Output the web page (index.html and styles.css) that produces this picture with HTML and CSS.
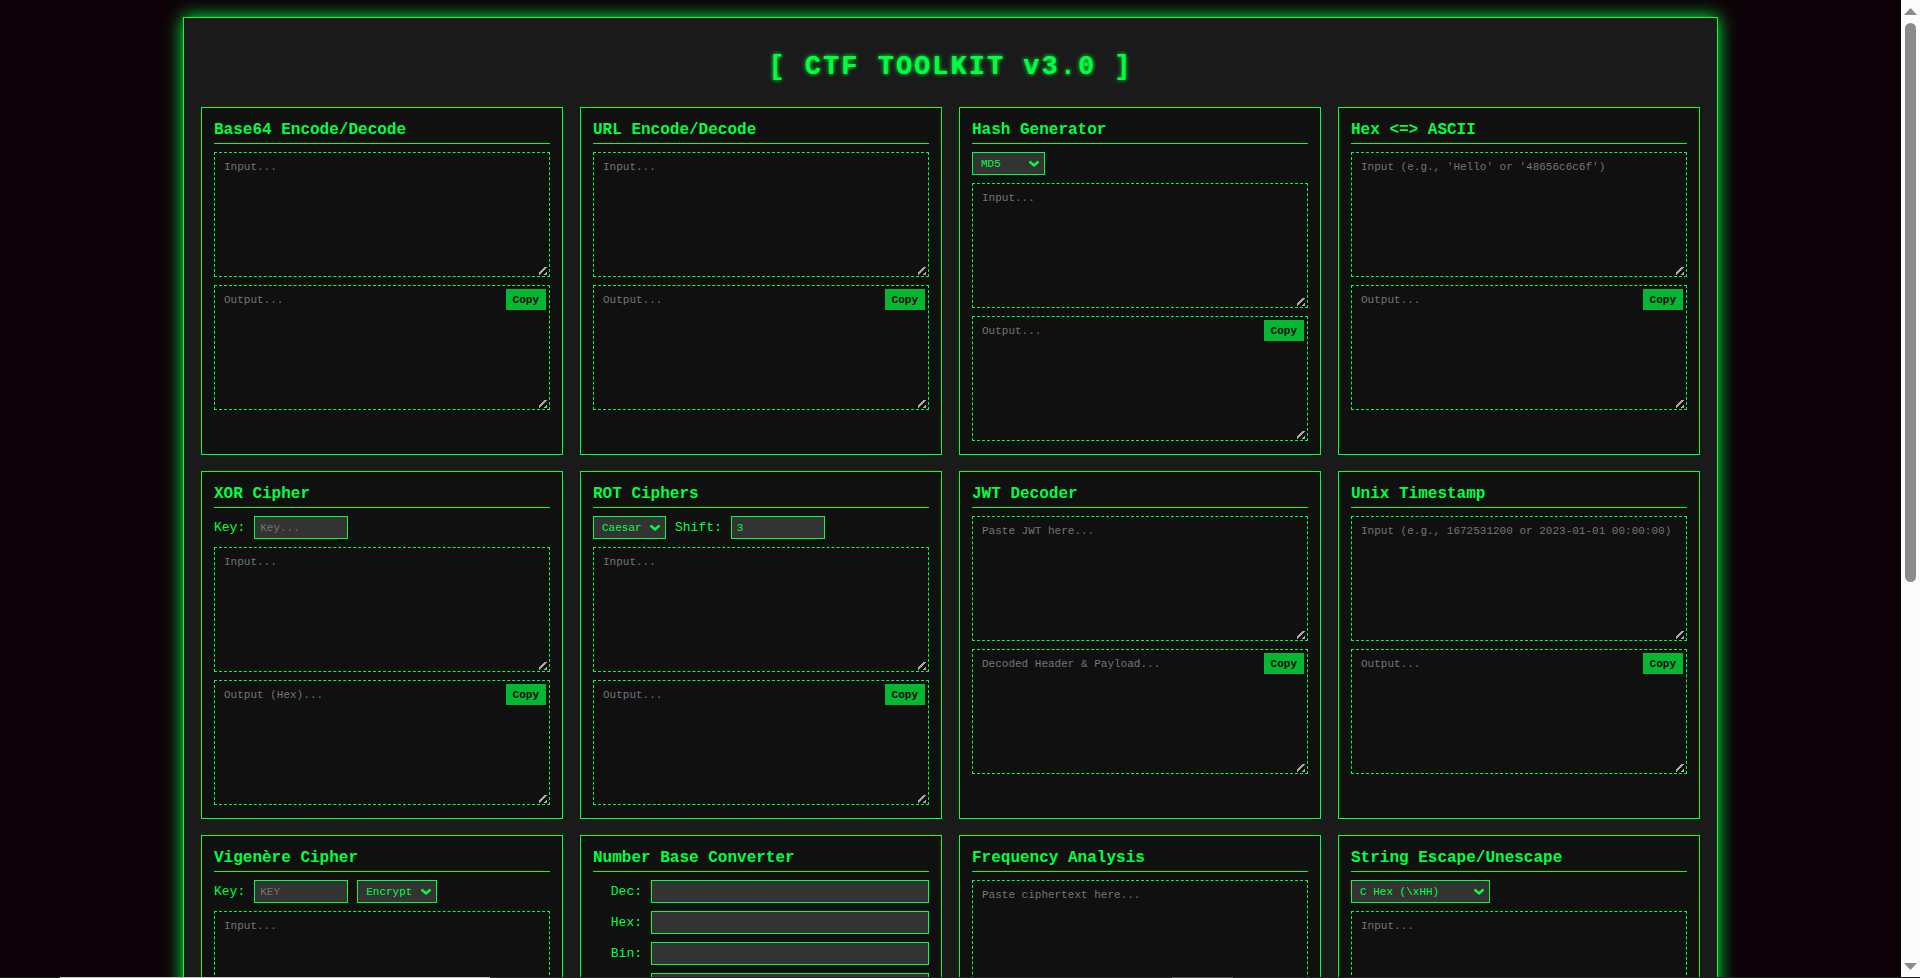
FILE: index.html
```html
<!DOCTYPE html>
<html lang="en">
<head>
<meta charset="utf-8">
<title>CTF Toolkit</title>
<link rel="stylesheet" href="styles.css">
</head>
<body>
<main class="page">
  <div class="container">
    <h1 class="title">[ CTF TOOLKIT v3.0 ]</h1>
    <div class="grid">
      <section class="tool">
        <h2 class="tool-title">Base64 Encode/Decode</h2>
        <textarea class="area" aria-label="Base64 input" placeholder="Input..."></textarea>
        <div class="output"><textarea class="area" aria-label="Base64 output" placeholder="Output..." readonly></textarea><button class="copy" type="button">Copy</button></div>
      </section>
      <section class="tool">
        <h2 class="tool-title">URL Encode/Decode</h2>
        <textarea class="area" aria-label="URL input" placeholder="Input..."></textarea>
        <div class="output"><textarea class="area" aria-label="URL output" placeholder="Output..." readonly></textarea><button class="copy" type="button">Copy</button></div>
      </section>
      <section class="tool">
        <h2 class="tool-title">Hash Generator</h2>
        <div class="controls">
          <span class="picker"><select class="field" aria-label="Hash algorithm"><option>MD5</option><option>SHA1</option><option>SHA256</option></select><svg class="chevron" viewBox="0 0 12 8"><path d="M1.5 1.5L6 5.5L10.5 1.5"/></svg></span>
        </div>
        <textarea class="area" aria-label="Hash input" placeholder="Input..."></textarea>
        <div class="output"><textarea class="area" aria-label="Hash output" placeholder="Output..." readonly></textarea><button class="copy" type="button">Copy</button></div>
      </section>
      <section class="tool">
        <h2 class="tool-title">Hex &lt;=&gt; ASCII</h2>
        <textarea class="area" aria-label="Hex or ASCII input" placeholder="Input (e.g., 'Hello' or '48656c6c6f')"></textarea>
        <div class="output"><textarea class="area" aria-label="Hex or ASCII output" placeholder="Output..." readonly></textarea><button class="copy" type="button">Copy</button></div>
      </section>

      <section class="tool">
        <h2 class="tool-title">XOR Cipher</h2>
        <div class="controls">
          <label for="xor-key">Key:</label>
          <input class="field short" id="xor-key" type="text" placeholder="Key...">
        </div>
        <textarea class="area" aria-label="XOR input" placeholder="Input..."></textarea>
        <div class="output"><textarea class="area" aria-label="XOR output" placeholder="Output (Hex)..." readonly></textarea><button class="copy" type="button">Copy</button></div>
      </section>
      <section class="tool">
        <h2 class="tool-title">ROT Ciphers</h2>
        <div class="controls">
          <span class="picker"><select class="field" aria-label="ROT variant"><option>Caesar</option><option>ROT13</option><option>ROT47</option></select><svg class="chevron" viewBox="0 0 12 8"><path d="M1.5 1.5L6 5.5L10.5 1.5"/></svg></span>
          <label for="rot-shift">Shift:</label>
          <input class="field short" id="rot-shift" type="number" value="3">
        </div>
        <textarea class="area" aria-label="ROT input" placeholder="Input..."></textarea>
        <div class="output"><textarea class="area" aria-label="ROT output" placeholder="Output..." readonly></textarea><button class="copy" type="button">Copy</button></div>
      </section>
      <section class="tool">
        <h2 class="tool-title">JWT Decoder</h2>
        <textarea class="area" aria-label="JWT" placeholder="Paste JWT here..."></textarea>
        <div class="output"><textarea class="area" aria-label="Decoded JWT" placeholder="Decoded Header &amp; Payload..." readonly></textarea><button class="copy" type="button">Copy</button></div>
      </section>
      <section class="tool">
        <h2 class="tool-title">Unix Timestamp</h2>
        <textarea class="area" aria-label="Timestamp input" placeholder="Input (e.g., 1672531200 or 2023-01-01 00:00:00)"></textarea>
        <div class="output"><textarea class="area" aria-label="Timestamp output" placeholder="Output..." readonly></textarea><button class="copy" type="button">Copy</button></div>
      </section>

      <section class="tool">
        <h2 class="tool-title">Vigenère Cipher</h2>
        <div class="controls">
          <label for="vig-key">Key:</label>
          <input class="field short" id="vig-key" type="text" placeholder="KEY">
          <span class="picker"><select class="field" aria-label="Vigenère mode"><option>Encrypt</option><option>Decrypt</option></select><svg class="chevron" viewBox="0 0 12 8"><path d="M1.5 1.5L6 5.5L10.5 1.5"/></svg></span>
        </div>
        <textarea class="area" aria-label="Vigenère input" placeholder="Input..."></textarea>
        <div class="output"><textarea class="area" aria-label="Vigenère output" placeholder="Output..." readonly></textarea><button class="copy" type="button">Copy</button></div>
      </section>
      <section class="tool">
        <h2 class="tool-title">Number Base Converter</h2>
        <div class="controls base"><label for="dec">Dec:</label><input class="field" id="dec" type="text"></div>
        <div class="controls base"><label for="hex">Hex:</label><input class="field" id="hex" type="text"></div>
        <div class="controls base"><label for="bin">Bin:</label><input class="field" id="bin" type="text"></div>
        <div class="controls base"><label for="oct">Oct:</label><input class="field" id="oct" type="text"></div>
      </section>
      <section class="tool">
        <h2 class="tool-title">Frequency Analysis</h2>
        <textarea class="area" aria-label="Ciphertext" placeholder="Paste ciphertext here..."></textarea>
        <div class="output"><textarea class="area" aria-label="Frequency output" placeholder="Output..." readonly></textarea><button class="copy" type="button">Copy</button></div>
      </section>
      <section class="tool">
        <h2 class="tool-title">String Escape/Unescape</h2>
        <div class="controls">
          <span class="picker"><select class="field" aria-label="Escape format"><option>C Hex (\xHH)</option><option>Unicode (\uHHHH)</option></select><svg class="chevron" viewBox="0 0 12 8"><path d="M1.5 1.5L6 5.5L10.5 1.5"/></svg></span>
        </div>
        <textarea class="area" aria-label="String input" placeholder="Input..."></textarea>
        <div class="output"><textarea class="area" aria-label="String output" placeholder="Output..." readonly></textarea><button class="copy" type="button">Copy</button></div>
      </section>
    </div>
  </div>
</main>
<div class="scrollbar" aria-hidden="true">
  <svg class="arrow" viewBox="0 0 13 7"><path d="M6.5 0L13 7H0Z"/></svg>
  <div class="track"><div class="thumb"></div></div>
  <svg class="arrow" viewBox="0 0 13 7"><path d="M0 0H13L6.5 7Z"/></svg>
</div>
<div class="edge" aria-hidden="true"></div>
</body>
</html>
```
FILE: styles.css
```css
:root {
  --green: #00ff41;
  --night: #0d0208;
  --panel: #1a1a1a;
  --card: #101010;
  --field: #333;
  --grip: #a8a8a8;
}

* { box-sizing: border-box; }

body {
  margin: 0;
  height: 100vh;
  display: flex;
  overflow: hidden;
  background: var(--night);
  color: var(--green);
  font: 13px "Courier New", "Liberation Mono", monospace;
}

.page {
  flex: 1;
  min-width: 0;
  padding: 17px;
  overflow-y: auto;
  scrollbar-width: none;
}

.container {
  max-width: 1535px;
  margin: 0 auto;
  padding: 17px;
  background: var(--panel);
  border: 1px solid var(--green);
  box-shadow: 0 0 17px var(--green);
}

.title {
  margin: 16px 0 24px;
  font-size: 27px;
  line-height: 32px;
  letter-spacing: 2px;
  text-align: center;
  text-shadow: 0 0 4px var(--green);
}

.grid {
  display: grid;
  grid-template-columns: repeat(auto-fit, minmax(340px, 1fr));
  gap: 16px 17px;
}

.tool {
  display: flex;
  flex-direction: column;
  gap: 8px;
  min-width: 0;
  padding: 12px 12px 13px;
  background: var(--card);
  border: 1px solid var(--green);
}

.tool-title {
  margin: 0;
  padding-bottom: 3px;
  border-bottom: 1px solid var(--green);
  font-size: 16px;
  line-height: 20px;
}

.controls {
  display: flex;
  align-items: center;
  gap: 9px;
}

.field {
  height: 23px;
  padding: 4px 5px;
  background: var(--field);
  border: 1px solid var(--green);
  border-radius: 0;
  color: var(--green);
  font-family: inherit;
  font-size: 11px;
}

.short { width: 94px; }

.picker {
  position: relative;
  display: flex;
}

.picker .field {
  padding: 0 23px 0 8px;
  appearance: none;
}

.chevron {
  position: absolute;
  top: 8px;
  right: 5px;
  width: 12px;
  height: 8px;
  fill: none;
  stroke: var(--green);
  stroke-width: 2.4;
  pointer-events: none;
}

.base label {
  width: 49px;
  text-align: right;
}

.base .field {
  flex: 1;
  min-width: 0;
}

.area {
  display: block;
  width: 100%;
  height: 125px;
  padding: 8px 9px;
  background: var(--card);
  border: 1px dashed var(--green);
  color: var(--green);
  font-family: inherit;
  font-size: 11px;
  resize: vertical;
}

.area::-webkit-resizer {
  background: linear-gradient(135deg, transparent 4px, var(--grip) 4px 6px, transparent 6px 9px, var(--grip) 9px) right 2px bottom 1px / 8px 8px no-repeat;
}

.field::placeholder,
.area::placeholder { color: #757575; }

.output { position: relative; }

.copy {
  position: absolute;
  top: 4px;
  right: 4px;
  height: 21px;
  padding: 0 7px;
  background: var(--green);
  border: 0;
  color: var(--night);
  font-family: inherit;
  font-size: 11px;
  font-weight: bold;
  opacity: 0.7;
}

.scrollbar {
  width: 19px;
  display: flex;
  flex-direction: column;
  align-items: center;
  gap: 8px;
  padding: 8px 0;
  background: #fcfcfc;
}

.arrow {
  width: 13px;
  height: 7px;
  fill: #8b8b8b;
}

.track { flex: 1; }

.thumb {
  width: 11px;
  height: 60%;
  background: #8b8b8b;
  border-radius: 6px;
}

.edge {
  position: fixed;
  inset: auto 0 0;
  height: 1px;
  background: linear-gradient(90deg, #222 60px, #c4c4c4 60px 490px, #222 490px 1172px, #555 1172px 1233px, #222 1233px);
}
```
